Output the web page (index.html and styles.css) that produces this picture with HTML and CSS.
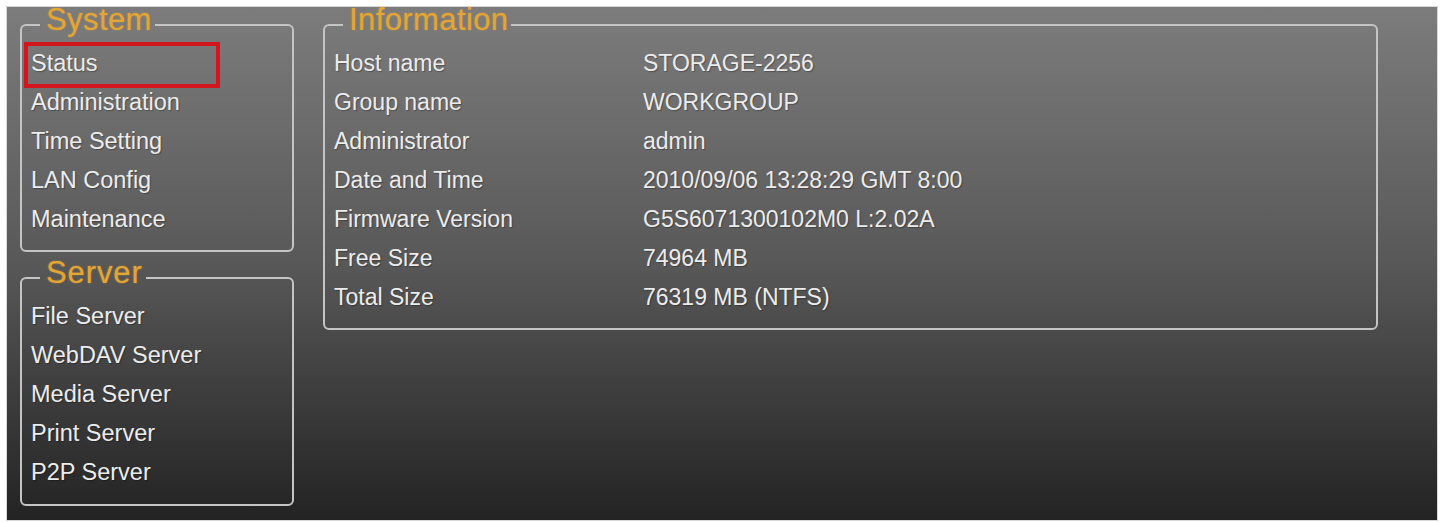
FILE: index.html
```html
<!DOCTYPE html>
<html lang="en">
<head>
<meta charset="utf-8">
<title>System Status</title>
<link rel="stylesheet" href="styles.css">
</head>
<body>
<div class="screen">
  <div class="sidebar">
    <fieldset class="group group-system">
      <legend>System</legend>
      <ul class="menu">
        <li class="item selected">Status</li>
        <li class="item">Administration</li>
        <li class="item">Time Setting</li>
        <li class="item">LAN Config</li>
        <li class="item">Maintenance</li>
      </ul>
    </fieldset>
    <fieldset class="group group-server">
      <legend>Server</legend>
      <ul class="menu">
        <li class="item">File Server</li>
        <li class="item">WebDAV Server</li>
        <li class="item">Media Server</li>
        <li class="item">Print Server</li>
        <li class="item">P2P Server</li>
      </ul>
    </fieldset>
  </div>
  <fieldset class="group group-info">
    <legend>Information</legend>
    <dl class="info">
      <dt>Host name</dt><dd>STORAGE-2256</dd>
      <dt>Group name</dt><dd>WORKGROUP</dd>
      <dt>Administrator</dt><dd>admin</dd>
      <dt>Date and Time</dt><dd>2010/09/06 13:28:29 GMT 8:00</dd>
      <dt>Firmware Version</dt><dd>G5S6071300102M0 L:2.02A</dd>
      <dt>Free Size</dt><dd>74964 MB</dd>
      <dt>Total Size</dt><dd>76319 MB (NTFS)</dd>
    </dl>
  </fieldset>
</div>
</body>
</html>
```

FILE: styles.css
```css
*,
*::before,
*::after {
  box-sizing: border-box;
}

html, body {
  margin: 0;
  padding: 0;
  background: #ffffff;
}

body {
  font-family: "Liberation Sans", Arial, sans-serif;
  width: 1442px;
  height: 523px;
  overflow: hidden;
}

.screen {
  margin: 7px 5px 3px 7px;
  width: 1430px;
  height: 513px;
  background: linear-gradient(to bottom, #7c7c7c 0%, #585858 50%, #232323 100%);
  box-shadow: 0 0 0 1px #d8d8d8;
  display: flex;
  align-items: flex-start;
  gap: 29px;
  padding: 0 0 0 13px;
}

.sidebar {
  width: 274px;
  display: flex;
  flex-direction: column;
  gap: 8px;
}

.group {
  margin: 0;
  border: 2px solid #c4c4c4;
  border-radius: 6px;
  padding: 2px 9px 11px 9px;
  min-width: 0;
}

.group legend {
  margin-left: 9px;
  padding: 0 3px 9px 6px;
  font-size: 31px;
  line-height: 26px;
  letter-spacing: 0.4px;
  color: #e3a534;
  text-shadow: 0 0 2px rgba(235, 165, 45, 0.55);
}

.group-server {
  padding-bottom: 12px;
}

.group-server legend {
  letter-spacing: 0.9px;
}

.group-info {
  width: 1055px;
}

.menu {
  list-style: none;
  margin: 0;
  padding: 0;
}

.item {
  position: relative;
  height: 39px;
  line-height: 39px;
  font-size: 23.5px;
  color: #ececec;
  text-shadow: 1px 1px 1px rgba(0, 0, 0, 0.3);
  white-space: nowrap;
}

.item.selected::after {
  content: "";
  position: absolute;
  left: -7px;
  top: -2px;
  width: 196px;
  height: 46px;
  border: 4px solid #d3161e;
}

.info {
  margin: 0;
  display: grid;
  grid-template-columns: 309px 1fr;
  grid-auto-rows: 39px;
  font-size: 23px;
  line-height: 39px;
  color: #ececec;
  text-shadow: 1px 1px 1px rgba(0, 0, 0, 0.3);
}

.info dt,
.info dd {
  margin: 0;
  white-space: nowrap;
}
```
